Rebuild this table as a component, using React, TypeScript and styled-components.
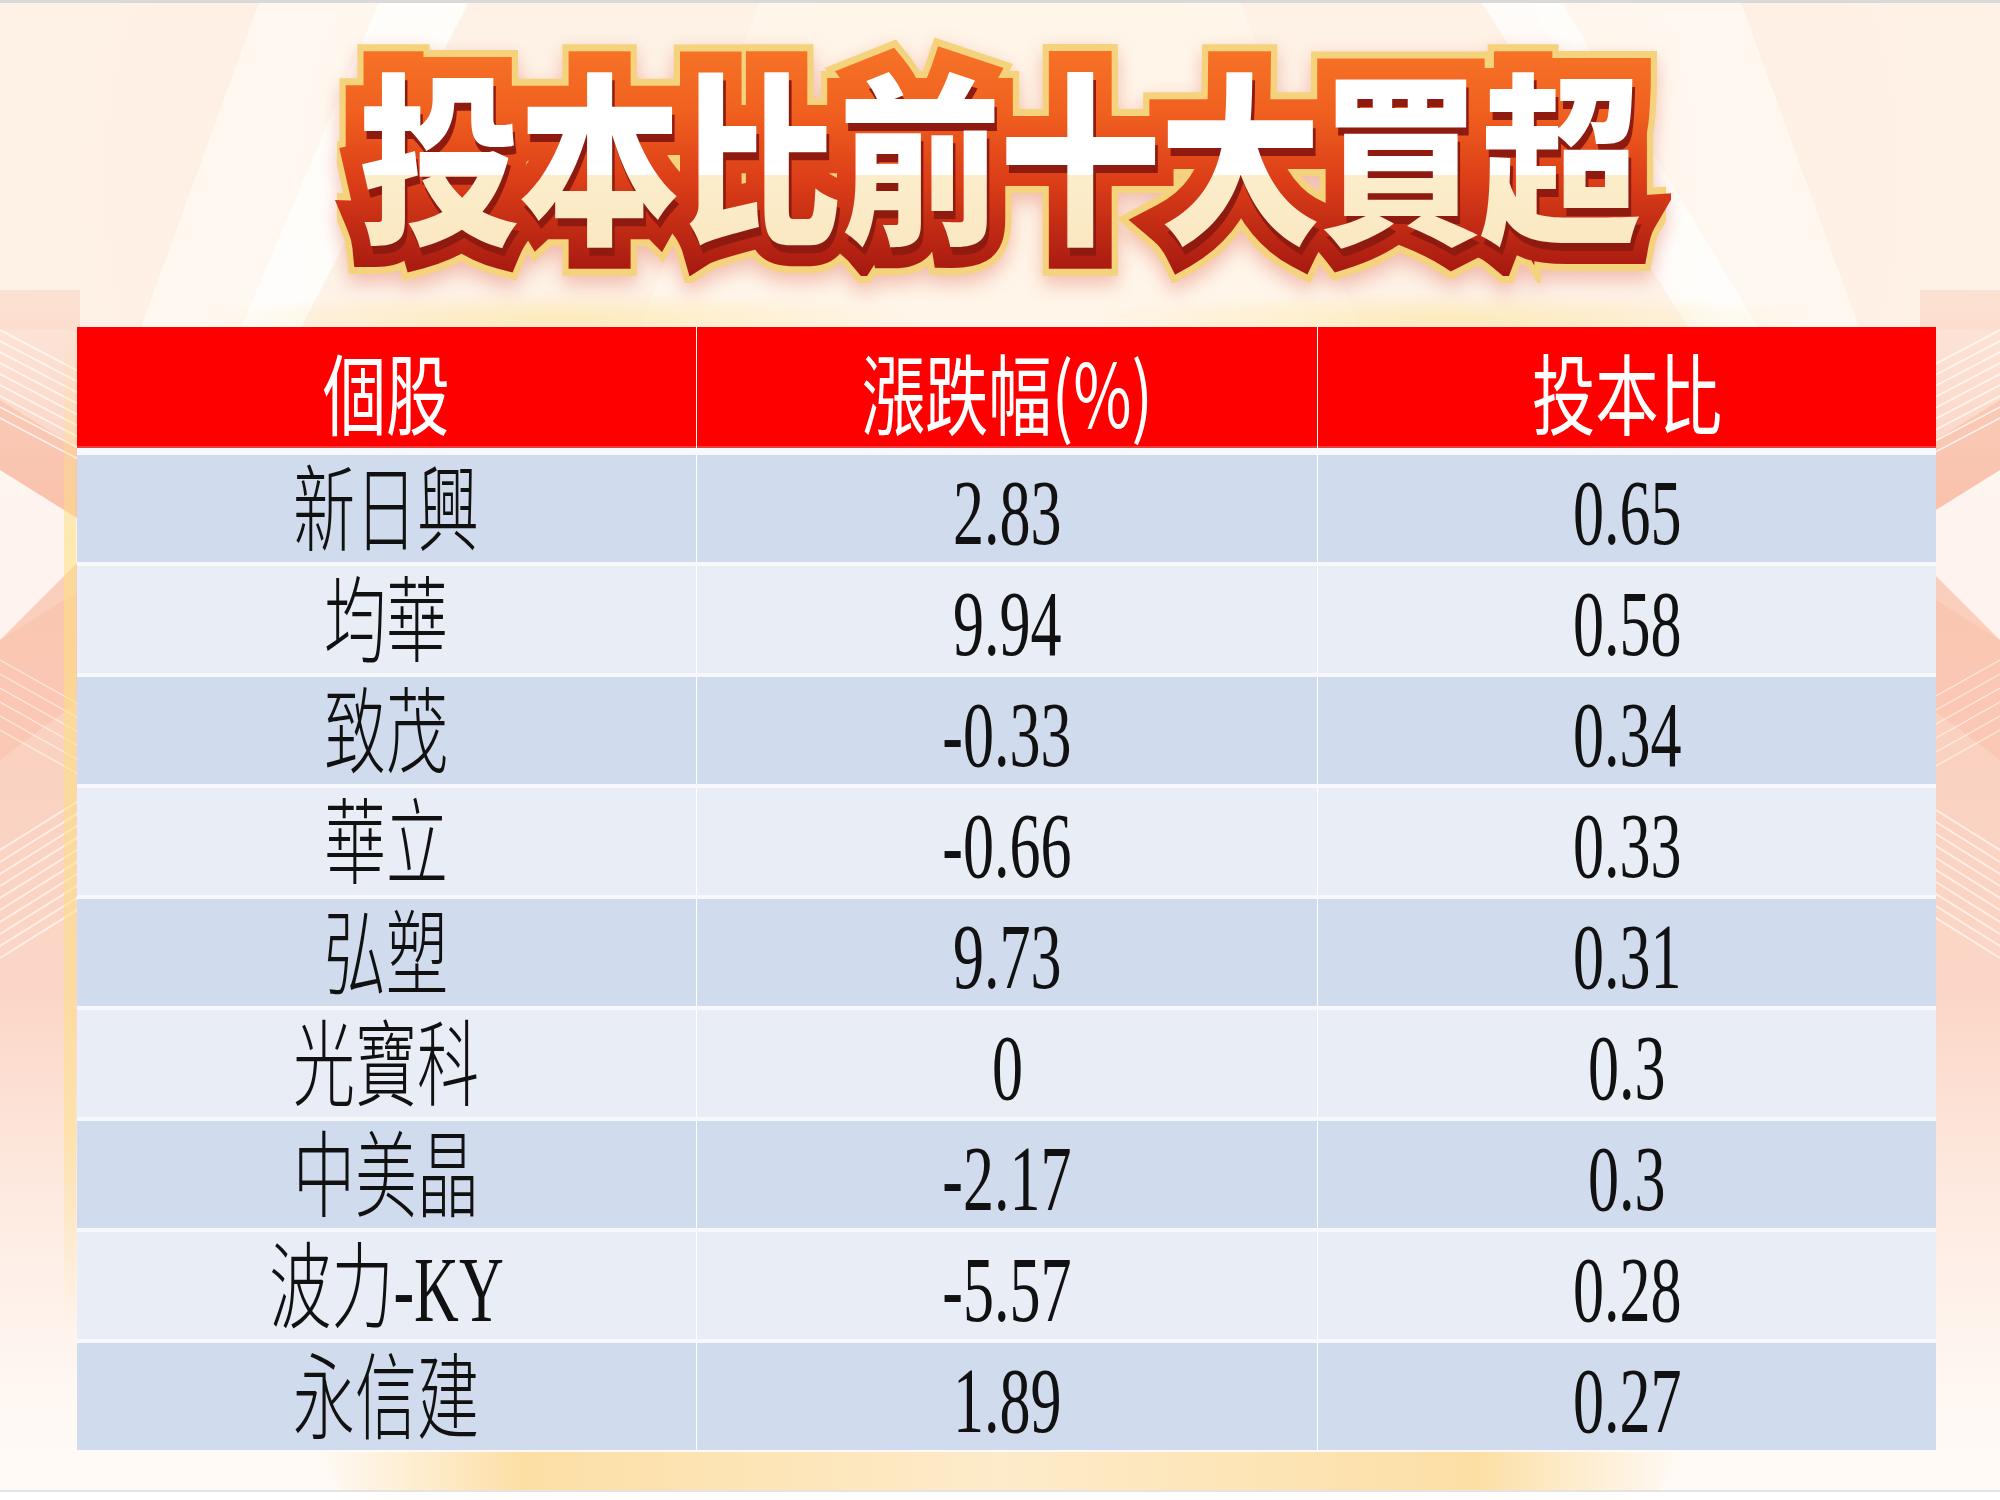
import React from 'react';
import styled, { createGlobalStyle, css } from 'styled-components';

interface StockRow {
  name: string;
  change: string;
  ratio: string;
}

type LayerKind = 'gold' | 'rim' | 'depth';

const TITLE = '投本比前十大買超';

const rows: StockRow[] = [
  { name: '新日興', change: '2.83', ratio: '0.65' },
  { name: '均華', change: '9.94', ratio: '0.58' },
  { name: '致茂', change: '-0.33', ratio: '0.34' },
  { name: '華立', change: '-0.66', ratio: '0.33' },
  { name: '弘塑', change: '9.73', ratio: '0.31' },
  { name: '光寶科', change: '0', ratio: '0.3' },
  { name: '中美晶', change: '-2.17', ratio: '0.3' },
  { name: '波力-KY', change: '-5.57', ratio: '0.28' },
  { name: '永信建', change: '1.89', ratio: '0.27' },
];

const headers = ['個股', '漲跌幅(%)', '投本比'];

// side strip with the diagonal light lines, drawn once and mirrored for the right edge
const SideStrip: React.FC = () => (
  <g>
    <rect x="0" y="290" width="80" height="1170" fill="url(#sideGrad)" />
    <polygon points="0,400 80,450 80,520 0,470" fill="#f6a98c" opacity="0.35" />
    <polygon points="0,470 80,520 80,560 0,640" fill="#ffffff" opacity="0.75" />
    <polygon points="0,640 80,590 80,700 0,760" fill="#f8b499" opacity="0.3" />
    {Array.from({ length: 9 }).map((_, i) => (
      <line key={`a${i}`} x1="0" y1={330 + i * 11} x2="80" y2={372 + i * 11} stroke="#fff" strokeWidth="1.6" opacity="0.7" />
    ))}
    {Array.from({ length: 10 }).map((_, i) => (
      <line key={`b${i}`} x1="0" y1={850 + i * 12} x2="80" y2={800 + i * 12} stroke="#fff" strokeWidth="1.8" opacity="0.65" />
    ))}
    {Array.from({ length: 6 }).map((_, i) => (
      <line key={`c${i}`} x1="0" y1={660 + i * 14} x2="80" y2={705 + i * 14} stroke="#fff" strokeWidth="1.4" opacity="0.55" />
    ))}
    <rect x="64" y="330" width="12" height="1000" fill="url(#edgeGlow)" />
  </g>
);

const Backdrop: React.FC = () => (
  <BackdropSvg viewBox="0 0 2000 1500" preserveAspectRatio="none" aria-hidden>
    <defs>
      <linearGradient id="sideGrad" x1="0" y1="0" x2="0" y2="1">
        <stop offset="0" stopColor="#f9c4ad" stopOpacity="0.35" />
        <stop offset="0.2" stopColor="#f7b096" stopOpacity="0.6" />
        <stop offset="0.6" stopColor="#f8b89e" stopOpacity="0.55" />
        <stop offset="1" stopColor="#fbd6c6" stopOpacity="0" />
      </linearGradient>
      <linearGradient id="edgeGlow" x1="0" y1="0" x2="0" y2="1">
        <stop offset="0" stopColor="#fde28a" stopOpacity="0" />
        <stop offset="0.2" stopColor="#fde07e" stopOpacity="0.55" />
        <stop offset="0.8" stopColor="#fde07e" stopOpacity="0.5" />
        <stop offset="1" stopColor="#fde28a" stopOpacity="0" />
      </linearGradient>
      <radialGradient id="topGlow" cx="0.5" cy="0.12" r="0.6">
        <stop offset="0" stopColor="#fff4e6" />
        <stop offset="1" stopColor="#fffaf6" />
      </radialGradient>
      <linearGradient id="floorGlow" x1="0" y1="0" x2="1" y2="0">
        <stop offset="0" stopColor="#fcdc9c" stopOpacity="0" />
        <stop offset="0.15" stopColor="#fcdc9c" stopOpacity="0.9" />
        <stop offset="0.5" stopColor="#fde9c4" stopOpacity="0.9" />
        <stop offset="0.85" stopColor="#fcdc9c" stopOpacity="0.9" />
        <stop offset="1" stopColor="#fcdc9c" stopOpacity="0" />
      </linearGradient>
      <radialGradient id="shelfGlow" cx="0.5" cy="0.5" r="0.5">
        <stop offset="0" stopColor="#fde7a8" stopOpacity="0.7" />
        <stop offset="1" stopColor="#fde7a8" stopOpacity="0" />
      </radialGradient>
    </defs>
    <rect x="0" y="0" width="2000" height="1500" fill="url(#topGlow)" />
    <polygon points="0,0 260,0 140,330 0,330" fill="#fde6d8" opacity="0.45" />
    <polygon points="380,0 470,0 300,330 240,330" fill="#ffffff" opacity="0.7" />
    <polygon points="470,0 760,0 640,330 300,330" fill="#fdeee2" opacity="0.5" />
    <polygon points="1240,0 1530,0 1700,330 1360,330" fill="#fdeee2" opacity="0.5" />
    <polygon points="1480,0 1560,0 1760,330 1690,330" fill="#ffffff" opacity="0.7" />
    <polygon points="1740,0 2000,0 2000,330 1860,330" fill="#fde6d8" opacity="0.45" />
    <ellipse cx="560" cy="318" rx="360" ry="26" fill="url(#shelfGlow)" />
    <ellipse cx="1450" cy="318" rx="360" ry="26" fill="url(#shelfGlow)" />
    <SideStrip />
    <g transform="translate(2000,0) scale(-1,1)">
      <SideStrip />
    </g>
    <polygon points="320,1452 1680,1452 1660,1490 340,1490" fill="url(#floorGlow)" />
    <rect x="0" y="0" width="2000" height="3" fill="#d9d9d9" />
    <rect x="0" y="1490" width="2000" height="2" fill="#e3e3e3" />
    <rect x="0" y="1492" width="2000" height="8" fill="#ffffff" />
  </BackdropSvg>
);

const App: React.FC = () => {
  return (
    <>
      <GlobalStyle />
      <Page>
        <Backdrop />
        <Content>
          <TitleArea>
            <TitleStack>
              <TitleLayer $kind="gold" data-text={TITLE} aria-hidden />
              <TitleLayer $kind="rim" data-text={TITLE} aria-hidden />
              <TitleLayer $kind="depth" data-text={TITLE} aria-hidden />
              <TitleFace>{TITLE}</TitleFace>
            </TitleStack>
          </TitleArea>
          <Table>
            <HeaderRow>
              {headers.map((h) => (
                <HeaderCell key={h}>
                  <HeaderText>{h}</HeaderText>
                </HeaderCell>
              ))}
            </HeaderRow>
            {rows.map((row, i) => (
              <BodyRow key={row.name}>
                <Cell $band={i % 2 === 0}>
                  <CellText>{row.name}</CellText>
                </Cell>
                <Cell $band={i % 2 === 0}>
                  <CellText>{row.change}</CellText>
                </Cell>
                <Cell $band={i % 2 === 0}>
                  <CellText>{row.ratio}</CellText>
                </Cell>
              </BodyRow>
            ))}
          </Table>
        </Content>
      </Page>
    </>
  );
};

export default App;

const GlobalStyle = createGlobalStyle`
  html, body {
    margin: 0;
    padding: 0;
    background: #ffffff;
  }
  body {
    font-family: "Noto Sans CJK TC", "Noto Sans", sans-serif;
  }
`;

const Page = styled.div`
  position: relative;
  width: 2000px;
  height: 1500px;
  overflow: hidden;
  background: #fffaf6;
`;

const BackdropSvg = styled.svg`
  position: absolute;
  inset: 0;
  width: 2000px;
  height: 1500px;
  z-index: 0;
`;

const Content = styled.div`
  position: relative;
  z-index: 1;
  display: flex;
  flex-direction: column;
  padding-left: 77px;
`;

const TitleArea = styled.div`
  height: 327px;
  width: 1923px;
  display: flex;
  justify-content: center;
  align-items: center;
  padding-right: 77px;
  box-sizing: border-box;
`;

const TitleStack = styled.div`
  display: grid;
  isolation: isolate;
  margin-top: -28px;
  transform: scaleX(0.88);

  & > * {
    grid-area: 1 / 1;
  }
`;

const titleText = css`
  position: relative;
  font-family: "Noto Sans CJK TC", "Noto Sans CJK SC", sans-serif;
  font-weight: 900;
  font-size: 184px;
  line-height: 1;
  letter-spacing: -2px;
  padding: 34px 36px 34px 34px;
  white-space: nowrap;
`;

const layerStyles: Record<LayerKind, ReturnType<typeof css>> = {
  gold: css`
    color: #f5d37c;
    -webkit-text-stroke: 56px #f5d37c;
    filter: drop-shadow(0 8px 10px rgba(214, 80, 60, 0.35));
  `,
  rim: css`
    background: linear-gradient(to bottom, #f97a2a 0%, #f0601f 35%, #dc3e18 62%, #a51810 100%);
    -webkit-background-clip: text;
    background-clip: text;
    color: transparent;
    -webkit-text-fill-color: transparent;
    -webkit-text-stroke: 42px transparent;
  `,
  depth: css`
    color: #8e1a10;
    transform: translate(3px, 8px);
  `,
};

const TitleLayer = styled.div<{ $kind: LayerKind }>`
  position: relative;

  &::before {
    content: attr(data-text);
    display: block;
    ${titleText}
    ${(p) => layerStyles[p.$kind]}
  }
`;

const TitleFace = styled.div`
  ${titleText}
  background: linear-gradient(to bottom, #ffffff 0%, #ffffff 60%, #fcedcb 60%, #f9e6bd 100%);
  -webkit-background-clip: text;
  background-clip: text;
  color: transparent;
  -webkit-text-fill-color: transparent;
`;

const Table = styled.div`
  width: 1859px;
  display: flex;
  flex-direction: column;
  gap: 4px;
  background: #f7f8fb;
`;

const HeaderRow = styled.div`
  display: grid;
  grid-template-columns: 619px 620px 618px;
  column-gap: 1px;
  height: 121px;
  margin-bottom: 3px;
  background: #ffffff;
`;

const HeaderCell = styled.div`
  display: flex;
  align-items: center;
  justify-content: center;
  background: #ff0000;
  box-shadow: inset 0 -2px 0 #f23a3a;
`;

const HeaderText = styled.span`
  display: inline-block;
  color: #ffffff;
  font-family: "Noto Sans CJK TC", "Noto Sans CJK SC", sans-serif;
  font-weight: 400;
  font-size: 88px;
  line-height: 1;
  transform: scaleX(0.72);
  margin-top: 4px;
`;

const BodyRow = styled.div`
  display: grid;
  grid-template-columns: 619px 620px 618px;
  column-gap: 1px;
  height: 107px;
  background: #ffffff;
`;

const Cell = styled.div<{ $band: boolean }>`
  display: flex;
  align-items: center;
  justify-content: center;
  background: ${(p) => (p.$band ? '#d1dbee' : '#e8edf6')};
`;

const CellText = styled.span`
  display: inline-block;
  color: #111111;
  font-family: "Liberation Serif", "Noto Sans CJK TC", "Noto Sans CJK SC", serif;
  font-weight: 300;
  font-size: 94px;
  line-height: 1;
  transform: scaleX(0.66);
  margin-top: 6px;
`;
